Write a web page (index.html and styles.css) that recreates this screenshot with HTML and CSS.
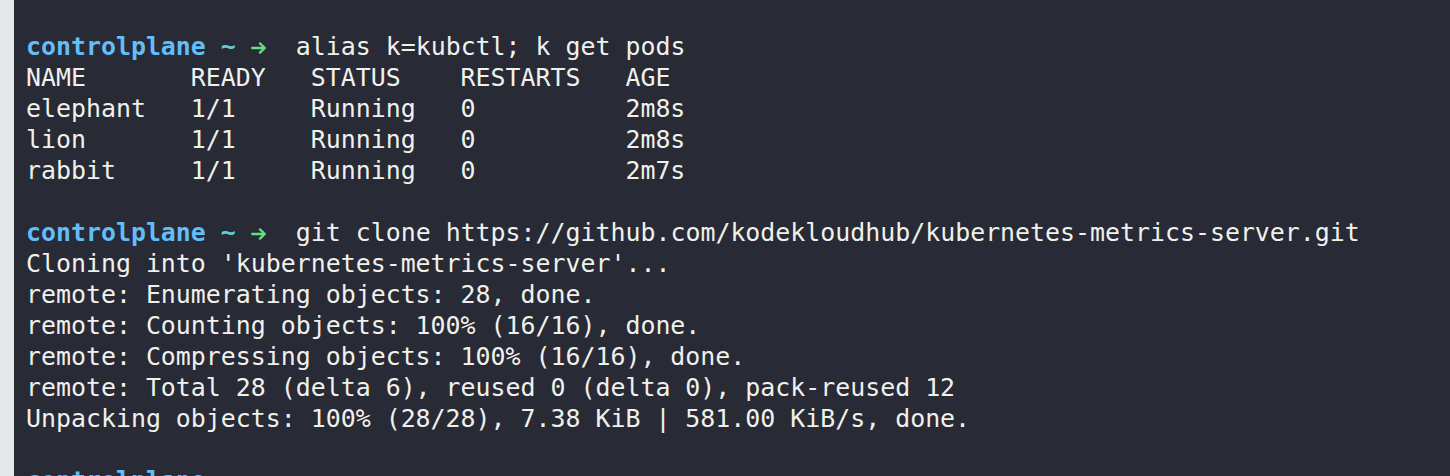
FILE: index.html
```html
<!DOCTYPE html>
<html lang="en">
<head>
<meta charset="utf-8">
<title>Terminal</title>
<link rel="stylesheet" href="styles.css">
</head>
<body>
<div class="window">
  <div class="strip"></div>
  <div class="terminal">
<div class="line"><span class="host">controlplane</span> <span class="tilde">~</span> <svg class="arrow" viewBox="0 0 15 31" width="15" height="31"><path d="M1.2 17 H13.3 M9 12.4 L13.8 17 L9 21.6" fill="none" stroke="#5fe17f" stroke-width="2.3" stroke-linecap="round" stroke-linejoin="round"/></svg>  alias k=kubctl; k get pods</div>
<div class="line">NAME       READY   STATUS    RESTARTS   AGE</div>
<div class="line">elephant   1/1     Running   0          2m8s</div>
<div class="line">lion       1/1     Running   0          2m8s</div>
<div class="line">rabbit     1/1     Running   0          2m7s</div>
<div class="line"> </div>
<div class="line"><span class="host">controlplane</span> <span class="tilde">~</span> <svg class="arrow" viewBox="0 0 15 31" width="15" height="31"><path d="M1.2 17 H13.3 M9 12.4 L13.8 17 L9 21.6" fill="none" stroke="#5fe17f" stroke-width="2.3" stroke-linecap="round" stroke-linejoin="round"/></svg>  git clone https://github.com/kodekloudhub/kubernetes-metrics-server.git</div>
<div class="line">Cloning into 'kubernetes-metrics-server'...</div>
<div class="line">remote: Enumerating objects: 28, done.</div>
<div class="line">remote: Counting objects: 100% (16/16), done.</div>
<div class="line">remote: Compressing objects: 100% (16/16), done.</div>
<div class="line">remote: Total 28 (delta 6), reused 0 (delta 0), pack-reused 12</div>
<div class="line">Unpacking objects: 100% (28/28), 7.38 KiB | 581.00 KiB/s, done.</div>
<div class="line"> </div>
<div class="line"><span class="host">controlplane</span> <span class="tilde">~</span> <svg class="arrow" viewBox="0 0 15 31" width="15" height="31"><path d="M1.2 17 H13.3 M9 12.4 L13.8 17 L9 21.6" fill="none" stroke="#5fe17f" stroke-width="2.3" stroke-linecap="round" stroke-linejoin="round"/></svg>  </div>
  </div>
</div>
</body>
</html>
```
FILE: styles.css
```css
html, body {
  margin: 0;
  padding: 0;
  height: 476px;
  overflow: hidden;
  background: #282a36;
}

.window {
  display: flex;
  height: 476px;
  overflow: hidden;
}

.strip {
  width: 14px;
  flex: 0 0 14px;
  background: #e6e7eb;
}

.terminal {
  flex: 1;
  background: #282a36;
  padding: 31px 0 0 12px;
  font-family: "DejaVu Sans Mono", "Liberation Mono", monospace;
  font-size: 24.9px;
  line-height: 31px;
  color: #f1f1ec;
}

.line {
  white-space: pre;
  height: 31px;
}

.host {
  color: #62bdf8;
  font-weight: bold;
}

.tilde {
  color: #5ad0d4;
  font-weight: bold;
}

.arrow {
  display: inline-block;
  vertical-align: top;
  width: 15px;
  height: 31px;
}
```
